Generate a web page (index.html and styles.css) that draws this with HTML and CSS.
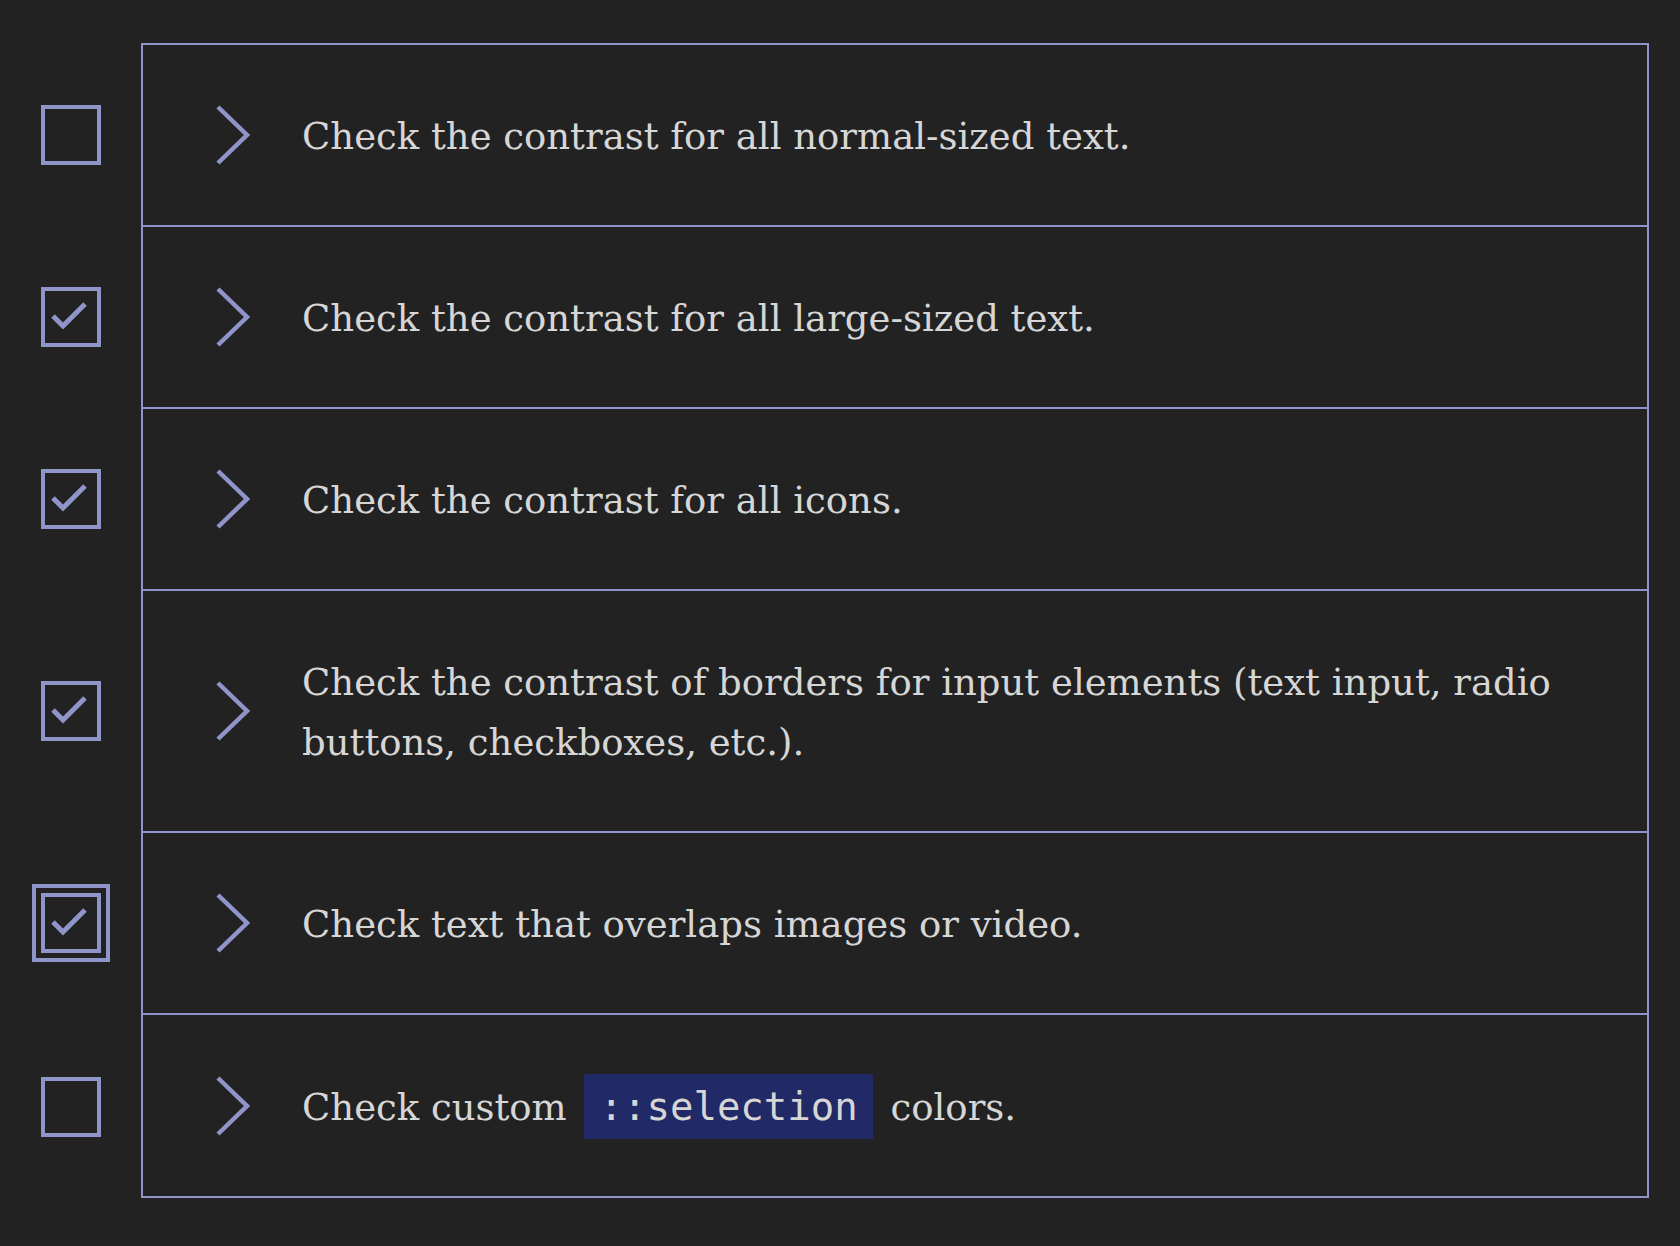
FILE: index.html
```html
<!DOCTYPE html>
<html lang="en">
<head>
<meta charset="utf-8">
<title>Contrast checklist</title>
<link rel="stylesheet" href="styles.css">
</head>
<body>
<ul class="checklist">
  <li class="item">
    <div class="check-col">
      <svg class="checkbox" viewBox="0 0 60 60" width="60" height="60"><rect x="2" y="2" width="56" height="56"/></svg>
    </div>
    <div class="row">
      <svg class="chev" viewBox="0 0 40 60" width="40" height="60"><polyline points="6,2 35,30 6,58"/></svg>
      <p class="label">Check the contrast for all normal-sized text.</p>
    </div>
  </li>
  <li class="item">
    <div class="check-col">
      <svg class="checkbox" viewBox="0 0 60 60" width="60" height="60"><rect x="2" y="2" width="56" height="56"/><polyline class="tick" points="12,29 22,39 44,17"/></svg>
    </div>
    <div class="row">
      <svg class="chev" viewBox="0 0 40 60" width="40" height="60"><polyline points="6,2 35,30 6,58"/></svg>
      <p class="label">Check the contrast for all large-sized text.</p>
    </div>
  </li>
  <li class="item">
    <div class="check-col">
      <svg class="checkbox" viewBox="0 0 60 60" width="60" height="60"><rect x="2" y="2" width="56" height="56"/><polyline class="tick" points="12,29 22,39 44,17"/></svg>
    </div>
    <div class="row">
      <svg class="chev" viewBox="0 0 40 60" width="40" height="60"><polyline points="6,2 35,30 6,58"/></svg>
      <p class="label">Check the contrast for all icons.</p>
    </div>
  </li>
  <li class="item">
    <div class="check-col">
      <svg class="checkbox" viewBox="0 0 60 60" width="60" height="60"><rect x="2" y="2" width="56" height="56"/><polyline class="tick" points="12,29 22,39 44,17"/></svg>
    </div>
    <div class="row">
      <svg class="chev" viewBox="0 0 40 60" width="40" height="60"><polyline points="6,2 35,30 6,58"/></svg>
      <p class="label">Check the contrast of borders for input elements (text input, radio buttons, checkboxes, etc.).</p>
    </div>
  </li>
  <li class="item">
    <div class="check-col">
      <svg class="checkbox focused" viewBox="0 0 60 60" width="60" height="60"><rect x="2" y="2" width="56" height="56"/><polyline class="tick" points="12,29 22,39 44,17"/></svg>
    </div>
    <div class="row">
      <svg class="chev" viewBox="0 0 40 60" width="40" height="60"><polyline points="6,2 35,30 6,58"/></svg>
      <p class="label">Check text that overlaps images or video.</p>
    </div>
  </li>
  <li class="item">
    <div class="check-col">
      <svg class="checkbox" viewBox="0 0 60 60" width="60" height="60"><rect x="2" y="2" width="56" height="56"/></svg>
    </div>
    <div class="row last">
      <svg class="chev" viewBox="0 0 40 60" width="40" height="60"><polyline points="6,2 35,30 6,58"/></svg>
      <p class="label">Check custom <code class="code">::selection</code> colors.</p>
    </div>
  </li>
</ul>
</body>
</html>
```
FILE: styles.css
```css
html, body {
  margin: 0;
  padding: 0;
  background: #222222;
}

.checklist {
  list-style: none;
  margin: 0;
  padding: 43px 31px 0 0;
  font-family: "DejaVu Serif", serif;
  color: #d6d6d6;
}

.item {
  display: flex;
  align-items: stretch;
}

.check-col {
  width: 141px;
  flex: none;
  display: flex;
  align-items: center;
  justify-content: center;
}

.checkbox {
  display: block;
  fill: none;
  stroke: #9095c9;
  stroke-width: 4;
  margin-top: 2px;
}

.checkbox .tick {
  stroke-width: 5;
  stroke-linecap: butt;
  stroke-linejoin: miter;
}

.checkbox.focused {
  outline: 4px solid #9095c9;
  outline-offset: 5px;
}

.row {
  flex: 1;
  display: flex;
  align-items: center;
  gap: 50px;
  padding: 60px 74px 60px 69px;
  border: 2px solid #9095c9;
  border-bottom: none;
}

.row.last {
  border-bottom: 2px solid #9095c9;
}

.chev {
  display: block;
  flex: none;
  fill: none;
  stroke: #9095c9;
  stroke-width: 4.5;
  stroke-linecap: butt;
  stroke-linejoin: miter;
}

.label {
  margin: 0;
  font-size: 37px;
  line-height: 60px;
  padding-top: 2px;
  margin-bottom: -2px;
}

.code {
  font-family: "DejaVu Sans Mono", monospace;
  font-size: 39px;
  background: #212966;
  color: #d6d6d6;
  padding: 10px 15px;
  margin: 0 6px;
}
```
